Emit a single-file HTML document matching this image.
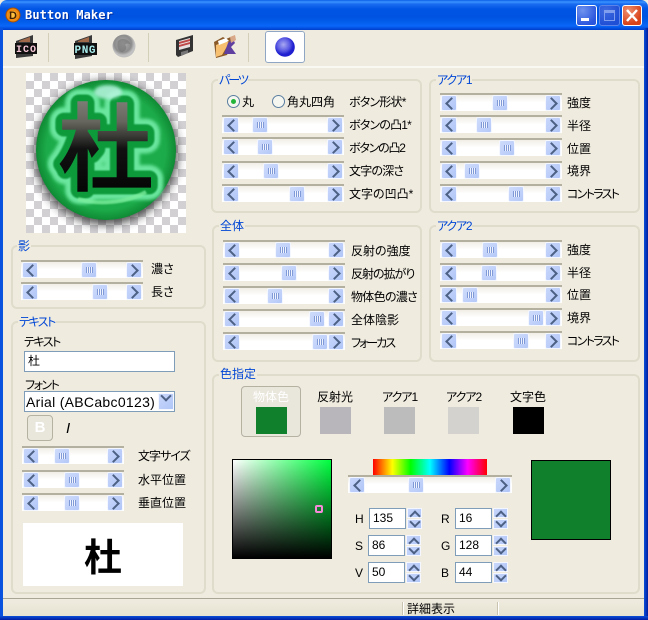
<!DOCTYPE html>
<html><head><meta charset="utf-8"><style>
html,body{margin:0;padding:0;width:648px;height:620px;overflow:hidden;background:#fff}
*{box-sizing:border-box}
#w{position:absolute;left:0;top:0;width:648px;height:620px;background:#efebdf;font:12px/14px "Liberation Sans","Noto Sans CJK JP",sans-serif;font-feature-settings:"palt";color:#000;overflow:hidden}
#w div,#w span,#w b,#w i{position:absolute;font-style:normal;font-weight:normal}
.t{white-space:nowrap}
.g{border:2px solid #dfdccb;border-radius:6px}
.gt{color:#0046d5;background:#efebdf;padding:0 1px;white-space:nowrap}
.sb{height:18px;border-top:2px solid #b3b0a0;background:linear-gradient(#f1eee6,#fff 50%,#fff);border-bottom:1px solid #fff}
.l,.r,.h{width:16px;height:16px;top:0;background:linear-gradient(135deg,#c8d6fa,#b0c6f8);border:1px solid #f4f7ff;border-radius:2px}
.l{left:1px}.r{right:1px}
.l:after,.r:after{content:"";position:absolute;top:3px;width:7px;height:7px;border-left:2.5px solid #4d6185;border-bottom:2.5px solid #4d6185}
.l:after{left:5px;transform:rotate(45deg)}
.r:after{left:1px;transform:rotate(225deg)}
.h{background:linear-gradient(135deg,#cfdcfb,#b4c8f8)}
.h:after{content:"";position:absolute;left:4px;top:4px;width:7px;height:6px;background:repeating-linear-gradient(90deg,#7f9ad6 0 1px,#eef3ff 1px 2px)}
.in{background:#fff;border:1px solid #7f9db9;height:21px;padding-left:3px;line-height:19px}
.sp{width:15px;height:10px;background:linear-gradient(135deg,#c8d6fa,#b0c6f8);border:1px solid #f4f7ff}
.u:after,.d:after{content:"";position:absolute;left:3px;width:6px;height:6px;border-left:2px solid #4d6185;border-top:2px solid #4d6185;transform:rotate(45deg)}
.u:after{top:3px}
.d:after{top:-2px;transform:rotate(225deg)}
.sw{width:31px;height:27px}
</style></head><body><div id="w">

<!-- frame -->
<div style="left:0;top:0;width:648px;height:30px;border-radius:7px 7px 0 0;background:linear-gradient(#0a5fe6 0,#3a93ff 2px,#1a6cf0 4px,#0055e5 9px,#0053e1 17px,#0460ee 23px,#0a66f8 26px,#0048d8 29px,#003dc8 30px)"></div>
<div style="left:0;top:28px;width:3px;height:592px;background:linear-gradient(90deg,#0a4fe0,#0855dd)"></div>
<div style="left:644px;top:28px;width:4px;height:592px;background:linear-gradient(90deg,#0a4fd8,#001ea0)"></div>
<div style="left:0;top:616px;width:648px;height:4px;background:linear-gradient(#0a4fd8,#001ea0)"></div>

<!-- title -->
<svg style="position:absolute;left:5px;top:7px" width="16" height="16"><circle cx="8" cy="8" r="7" fill="#f08a10" stroke="#a85000"/><circle cx="8" cy="8" r="4" fill="#ffc040"/><text x="8" y="12" font-size="11" font-weight="bold" text-anchor="middle" font-family="Liberation Sans" fill="#402000">D</text></svg>
<div class="t" style="left:25px;top:8px;color:#fff;font:bold 12px/15px 'DejaVu Sans Mono','Liberation Mono',monospace;letter-spacing:.1px;text-shadow:1px 1px 0 #0030a0">Button Maker</div>

<!-- window controls -->
<div style="left:576px;top:5px;width:21px;height:21px;border:1px solid #fff;border-radius:3px;background:radial-gradient(circle at 30% 25%,#6f93ee,#2a55dd 75%)"><i style="left:4px;top:12px;width:8px;height:3px;background:#fff"></i></div>
<div style="left:599px;top:5px;width:21px;height:21px;border:1px solid #5b83e8;border-radius:3px;background:radial-gradient(circle at 30% 25%,#3f6ae0,#1f4fd5 75%)"><i style="left:4px;top:4px;width:11px;height:11px;border:1px solid #7f9fee;border-top-width:3px"></i></div>
<div style="left:622px;top:5px;width:20px;height:21px;border:1px solid #fff;border-radius:3px;background:radial-gradient(circle at 30% 25%,#ef8f6f,#d8431a 70%)"><svg style="position:absolute;left:3px;top:3px" width="12" height="13"><path d="M1 1L11 12M11 1L1 12" stroke="#fff" stroke-width="2.4"/></svg></div>

<!-- toolbar separators -->
<div style="left:48px;top:33px;width:1px;height:29px;background:#d3cfb8"></div>
<div style="left:148px;top:33px;width:1px;height:29px;background:#d3cfb8"></div>
<div style="left:248px;top:33px;width:1px;height:29px;background:#d3cfb8"></div>
<div style="left:3px;top:66px;width:641px;height:2px;background:#faf8f2"></div>

<!-- toolbar icons -->
<svg style="position:absolute;left:14px;top:34px" width="24" height="25"><path d="M2 7L19 1V22L2 24Z" fill="#3a3a3a"/><path d="M5 7L16 3V8H5Z" fill="#a06a4a"/><rect x="1" y="9" width="22" height="11" fill="#101010"/><text x="12" y="18" text-anchor="middle" font-family="Liberation Mono" font-size="10" font-weight="bold" fill="#f8c8d8" textLength="20">ICO</text></svg>
<svg style="position:absolute;left:73px;top:34px" width="24" height="25"><path d="M2 7L19 1V22L2 25Z" fill="#3a3a3a"/><path d="M5 7L16 3V8H5Z" fill="#a06a4a"/><rect x="1" y="9" width="23" height="12" fill="#101010"/><text x="12" y="19" text-anchor="middle" font-family="Liberation Mono" font-size="11" font-weight="bold" fill="#a8ecec" textLength="21">PNG</text></svg>
<svg style="position:absolute;left:112px;top:34px" width="24" height="24"><defs><radialGradient id="gg" cx=".45" cy=".4"><stop offset="0" stop-color="#b0b0b0"/><stop offset=".75" stop-color="#8c8c8c"/><stop offset="1" stop-color="#c0c0c0"/></radialGradient></defs><circle cx="12" cy="12" r="11.5" fill="url(#gg)"/><path d="M6 7C10 3 17 5 19 11C17 9 14 9 13 11C16 13 13 19 9 18C5 16 5 10 6 7Z" fill="#777" opacity=".6"/></svg>
<svg style="position:absolute;left:175px;top:34px" width="20" height="24"><path d="M1 6L18 1V17L3 23L1 21Z" fill="#333"/><path d="M4 7L15 4V13L4 16Z" fill="#e8e0e0"/><path d="M4 8L15 5V7L4 10ZM4 11L15 8V10L4 13Z" fill="#c04848"/><path d="M6 22V18L13 16V19Z" fill="#777"/></svg>
<svg style="position:absolute;left:213px;top:34px" width="24" height="25"><path d="M1 8L10 3L13 5L20 2L20 8L14 21L3 24Z" fill="#8a5a28"/><path d="M3 11L13 7L16 9L9 21L3 23Z" fill="#f6c070"/><path d="M5 7L13 4L16 7L6 11Z" fill="#fff"/><path d="M15 9L20 5L22 9L18 13L23 20H11Z" fill="#5f3fa0"/><path d="M17 3L22 1L23 6L18 9Z" fill="#d8a888"/></svg>
<div style="left:265px;top:31px;width:40px;height:32px;background:#fff;border:1px solid #8fa7c4;border-radius:3px"></div>
<svg style="position:absolute;left:275px;top:37px" width="20" height="20"><defs><radialGradient id="bb" cx=".42" cy=".38"><stop offset="0" stop-color="#a8a8f2"/><stop offset=".65" stop-color="#5a5ae4"/><stop offset="1" stop-color="#2020d0"/></radialGradient></defs><circle cx="10" cy="10" r="9.8" fill="url(#bb)"/></svg>

<!-- logo -->
<div style="left:26px;top:73px;width:160px;height:160px;background:conic-gradient(#d2d0d3 25%,#fff 0 50%,#d2d0d3 0 75%,#fff 0) 0 0/16px 16px"></div>
<svg style="position:absolute;left:26px;top:73px" width="160" height="160" viewBox="26 73 160 160">
<defs>
<radialGradient id="o" cx=".5" cy=".5" r=".5"><stop offset="0" stop-color="#1cb04c"/><stop offset=".85" stop-color="#1cab4a"/><stop offset="1" stop-color="#0f8a34"/></radialGradient>
<linearGradient id="k" x1="0" y1="0" x2="0" y2="1"><stop offset="0" stop-color="#9a9a94"/><stop offset=".35" stop-color="#66665e"/><stop offset=".55" stop-color="#111"/><stop offset="1" stop-color="#000"/></linearGradient>
<filter id="bl" x="-20%" y="-20%" width="140%" height="140%"><feGaussianBlur stdDeviation="4.5"/></filter>
<filter id="bl2" x="-30%" y="-30%" width="160%" height="160%"><feGaussianBlur stdDeviation="1.5"/></filter>
<filter id="bl3" x="-30%" y="-30%" width="160%" height="160%"><feGaussianBlur stdDeviation=".8"/></filter>
</defs>
<circle cx="106" cy="153" r="72" fill="#2a2a2a" opacity=".8" filter="url(#bl)"/>
<circle cx="106" cy="150" r="70" fill="url(#o)"/>
<text x="106" y="182" text-anchor="middle" font-size="94" font-family="Noto Sans CJK JP" fill="#6ae69e" stroke="#6ae69e" stroke-width="28" stroke-linejoin="round" filter="url(#bl2)">杜</text>
<text x="106" y="182" text-anchor="middle" font-size="94" font-family="Noto Sans CJK JP" fill="#0c9a3a" stroke="#0c9a3a" stroke-width="17" stroke-linejoin="round" filter="url(#bl3)">杜</text>
<ellipse cx="108" cy="92" rx="14" ry="7" fill="#b8f4e0" opacity=".85" filter="url(#bl2)"/>
<path d="M78 199C98 205 126 203 146 192" stroke="#7cee9c" stroke-width="4" fill="none" opacity=".8" filter="url(#bl3)"/>
<text x="106" y="182" text-anchor="middle" font-size="94" font-family="Noto Sans CJK JP" fill="url(#k)" stroke="url(#k)" stroke-width="3.5">杜</text>
</svg>

<!-- group: 影 -->
<div class="g" style="left:11px;top:245px;width:195px;height:64px"></div>
<div class="gt" style="left:17px;top:239px">影</div>
<div class="sb" style="left:21px;top:260px;width:122px"><b class="l"></b><b class="r"></b><b class="h" style="left:60px"></b></div>
<div class="sb" style="left:21px;top:282px;width:122px"><b class="l"></b><b class="r"></b><b class="h" style="left:71px"></b></div>
<div class="t" style="left:151px;top:262px">濃さ</div>
<div class="t" style="left:151px;top:285px">長さ</div>

<!-- group: テキスト -->
<div class="g" style="left:11px;top:321px;width:195px;height:273px"></div>
<div class="gt" style="left:18px;top:315px;letter-spacing:-1.5px">テキスト</div>
<div class="t" style="left:24px;top:335px;letter-spacing:-1.5px">テキスト</div>
<div class="in" style="left:24px;top:351px;width:151px">杜</div>
<div class="t" style="left:25px;top:378px;letter-spacing:-1.5px">フォント</div>
<div class="in" style="left:24px;top:391px;width:151px;font-size:14px;line-height:20px;padding-left:1px;white-space:nowrap;overflow:hidden;letter-spacing:.3px">Arial (ABCabc0123)</div>
<div class="sp d" style="left:158px;top:393px;width:16px;height:17px"></div>
<div style="left:27px;top:415px;width:26px;height:26px;border:1px solid #b5b2a2;border-radius:4px;background:#e9e6dc;color:#fff;font:bold 15px/24px 'Liberation Sans',sans-serif;text-align:center">B</div>
<div style="left:66px;top:421px;font:italic 15px/16px 'Liberation Sans',sans-serif">I</div>
<div class="sb" style="left:22px;top:446px;width:102px"><b class="l"></b><b class="r"></b><b class="h" style="left:32px"></b></div>
<div class="sb" style="left:22px;top:470px;width:102px"><b class="l"></b><b class="r"></b><b class="h" style="left:42px"></b></div>
<div class="sb" style="left:22px;top:493px;width:102px"><b class="l"></b><b class="r"></b><b class="h" style="left:42px"></b></div>
<div class="t" style="left:138px;top:449px;letter-spacing:-1px">文字サイズ</div>
<div class="t" style="left:138px;top:473px">水平位置</div>
<div class="t" style="left:138px;top:496px">垂直位置</div>
<div style="left:23px;top:523px;width:160px;height:63px;background:#fff;text-align:center;font:bold 38px/63px 'Noto Sans CJK JP',sans-serif">杜</div>

<!-- group: パーツ -->
<div class="g" style="left:211px;top:79px;width:211px;height:134px"></div>
<div class="gt" style="left:218px;top:73px;letter-spacing:-2px">パーツ</div>
<div style="left:227px;top:95px;width:13px;height:13px;border-radius:50%;background:#f6f6f0;border:1px solid #5a7ea0"><i style="left:3px;top:3px;width:5px;height:5px;border-radius:50%;background:#22b53a"></i></div>
<div class="t" style="left:242px;top:95px">丸</div>
<div style="left:272px;top:95px;width:13px;height:13px;border-radius:50%;background:#f6f6f0;border:1px solid #5a7ea0"></div>
<div class="t" style="left:287px;top:95px">角丸四角</div>
<div class="t" style="left:349px;top:95px;letter-spacing:-.8px">ボタン形状*</div>
<div class="sb" style="left:222px;top:115px;width:122px"><b class="l"></b><b class="r"></b><b class="h" style="left:30px"></b></div>
<div class="sb" style="left:222px;top:137px;width:122px"><b class="l"></b><b class="r"></b><b class="h" style="left:35px"></b></div>
<div class="sb" style="left:222px;top:161px;width:122px"><b class="l"></b><b class="r"></b><b class="h" style="left:41px"></b></div>
<div class="sb" style="left:222px;top:184px;width:122px"><b class="l"></b><b class="r"></b><b class="h" style="left:67px"></b></div>
<div class="t" style="left:349px;top:118px;letter-spacing:-.8px">ボタンの凸1*</div>
<div class="t" style="left:349px;top:141px;letter-spacing:-1.2px">ボタンの凸2</div>
<div class="t" style="left:349px;top:164px;letter-spacing:-.8px">文字の深さ</div>
<div class="t" style="left:349px;top:187px">文字の凹凸*</div>

<!-- group: アクア1 -->
<div class="g" style="left:429px;top:79px;width:211px;height:134px"></div>
<div class="gt" style="left:436px;top:73px;letter-spacing:-1.2px">アクア1</div>
<div class="sb" style="left:440px;top:93px;width:122px"><b class="l"></b><b class="r"></b><b class="h" style="left:52px"></b></div>
<div class="sb" style="left:440px;top:115px;width:122px"><b class="l"></b><b class="r"></b><b class="h" style="left:36px"></b></div>
<div class="sb" style="left:440px;top:138px;width:122px"><b class="l"></b><b class="r"></b><b class="h" style="left:59px"></b></div>
<div class="sb" style="left:440px;top:161px;width:122px"><b class="l"></b><b class="r"></b><b class="h" style="left:24px"></b></div>
<div class="sb" style="left:440px;top:184px;width:122px"><b class="l"></b><b class="r"></b><b class="h" style="left:68px"></b></div>
<div class="t" style="left:567px;top:96px">強度</div>
<div class="t" style="left:567px;top:119px">半径</div>
<div class="t" style="left:567px;top:142px">位置</div>
<div class="t" style="left:567px;top:164px">境界</div>
<div class="t" style="left:567px;top:187px;letter-spacing:-1.7px">コントラスト</div>

<!-- group: 全体 -->
<div class="g" style="left:212px;top:225px;width:210px;height:137px"></div>
<div class="gt" style="left:219px;top:219px">全体</div>
<div class="sb" style="left:223px;top:240px;width:122px"><b class="l"></b><b class="r"></b><b class="h" style="left:52px"></b></div>
<div class="sb" style="left:223px;top:263px;width:122px"><b class="l"></b><b class="r"></b><b class="h" style="left:58px"></b></div>
<div class="sb" style="left:223px;top:286px;width:122px"><b class="l"></b><b class="r"></b><b class="h" style="left:44px"></b></div>
<div class="sb" style="left:223px;top:309px;width:122px"><b class="l"></b><b class="r"></b><b class="h" style="left:86px"></b></div>
<div class="sb" style="left:223px;top:332px;width:122px"><b class="l"></b><b class="r"></b><b class="h" style="left:89px"></b></div>
<div class="t" style="left:351px;top:244px">反射の強度</div>
<div class="t" style="left:351px;top:267px;letter-spacing:-1px">反射の拡がり</div>
<div class="t" style="left:351px;top:290px;letter-spacing:-.7px">物体色の濃さ</div>
<div class="t" style="left:351px;top:313px">全体陰影</div>
<div class="t" style="left:351px;top:336px;letter-spacing:-2px">フォーカス</div>

<!-- group: アクア2 -->
<div class="g" style="left:429px;top:225px;width:211px;height:137px"></div>
<div class="gt" style="left:436px;top:219px;letter-spacing:-1.2px">アクア2</div>
<div class="sb" style="left:440px;top:240px;width:122px"><b class="l"></b><b class="r"></b><b class="h" style="left:42px"></b></div>
<div class="sb" style="left:440px;top:263px;width:122px"><b class="l"></b><b class="r"></b><b class="h" style="left:41px"></b></div>
<div class="sb" style="left:440px;top:285px;width:122px"><b class="l"></b><b class="r"></b><b class="h" style="left:22px"></b></div>
<div class="sb" style="left:440px;top:308px;width:122px"><b class="l"></b><b class="r"></b><b class="h" style="left:88px"></b></div>
<div class="sb" style="left:440px;top:331px;width:122px"><b class="l"></b><b class="r"></b><b class="h" style="left:73px"></b></div>
<div class="t" style="left:567px;top:243px">強度</div>
<div class="t" style="left:567px;top:266px">半径</div>
<div class="t" style="left:567px;top:288px">位置</div>
<div class="t" style="left:567px;top:311px">境界</div>
<div class="t" style="left:567px;top:334px;letter-spacing:-1.7px">コントラスト</div>

<!-- group: 色指定 -->
<div class="g" style="left:212px;top:374px;width:428px;height:220px"></div>
<div class="gt" style="left:219px;top:367px">色指定</div>
<div style="left:241px;top:386px;width:60px;height:51px;background:#e9e6dc;border:1px solid #b5b2a2;border-radius:4px"></div>
<div class="t" style="left:253px;top:390px;color:#fff">物体色</div>
<div class="t" style="left:317px;top:390px">反射光</div>
<div class="t" style="left:382px;top:390px;letter-spacing:-1px">アクア1</div>
<div class="t" style="left:446px;top:390px;letter-spacing:-1px">アクア2</div>
<div class="t" style="left:510px;top:390px">文字色</div>
<div class="sw" style="left:256px;top:407px;background:#10802c"></div>
<div class="sw" style="left:320px;top:407px;background:#b8b6ba"></div>
<div class="sw" style="left:384px;top:407px;background:#bcbcbc"></div>
<div class="sw" style="left:448px;top:407px;background:#d4d2ce"></div>
<div class="sw" style="left:513px;top:407px;background:#000"></div>

<!-- sv square -->
<div style="left:232px;top:459px;width:100px;height:100px;border:1px solid #000;background:linear-gradient(transparent,#000),linear-gradient(90deg,#fff,#00ff40)"></div>
<div style="left:315px;top:505px;width:8px;height:8px;border:2px solid #f58ad8;border-radius:2px"></div>

<!-- hue -->
<div style="left:373px;top:459px;width:114px;height:16px;background:linear-gradient(90deg,#f00,#ff0 17%,#0f0 33%,#0ff 50%,#00f 67%,#f0f 83%,#f00)"></div>
<div class="sb" style="left:348px;top:475px;width:164px"><b class="l"></b><b class="r"></b><b class="h" style="left:60px"></b></div>
<div style="left:531px;top:460px;width:80px;height:80px;background:#10802c;border:1px solid #000"></div>

<!-- hsv / rgb -->
<div class="t" style="left:355px;top:512px">H</div>
<div class="t" style="left:355px;top:539px">S</div>
<div class="t" style="left:355px;top:566px">V</div>
<div class="t" style="left:441px;top:512px">R</div>
<div class="t" style="left:441px;top:539px">G</div>
<div class="t" style="left:441px;top:566px">B</div>
<div class="in" style="left:369px;top:508px;width:37px">135</div>
<div class="in" style="left:368px;top:535px;width:37px">86</div>
<div class="in" style="left:368px;top:562px;width:37px">50</div>
<div class="in" style="left:455px;top:508px;width:37px">16</div>
<div class="in" style="left:455px;top:535px;width:37px">128</div>
<div class="in" style="left:455px;top:562px;width:37px">44</div>
<div class="sp u" style="left:407px;top:508px"></div><div class="sp d" style="left:407px;top:519px"></div>
<div class="sp u" style="left:406px;top:535px"></div><div class="sp d" style="left:406px;top:546px"></div>
<div class="sp u" style="left:406px;top:562px"></div><div class="sp d" style="left:406px;top:573px"></div>
<div class="sp u" style="left:493px;top:508px"></div><div class="sp d" style="left:493px;top:519px"></div>
<div class="sp u" style="left:493px;top:535px"></div><div class="sp d" style="left:493px;top:546px"></div>
<div class="sp u" style="left:493px;top:562px"></div><div class="sp d" style="left:493px;top:573px"></div>

<!-- status bar -->
<div style="left:3px;top:598px;width:641px;height:18px;border-top:1px solid #a8a594;background:linear-gradient(#efebdf,#e8e4d2)"></div>
<div style="left:402px;top:602px;width:1px;height:13px;background:#c8c4b0;box-shadow:1px 0 0 #fff"></div>
<div style="left:497px;top:602px;width:1px;height:13px;background:#c8c4b0;box-shadow:1px 0 0 #fff"></div>
<div class="t" style="left:407px;top:602px">詳細表示</div>
</div></body></html>
